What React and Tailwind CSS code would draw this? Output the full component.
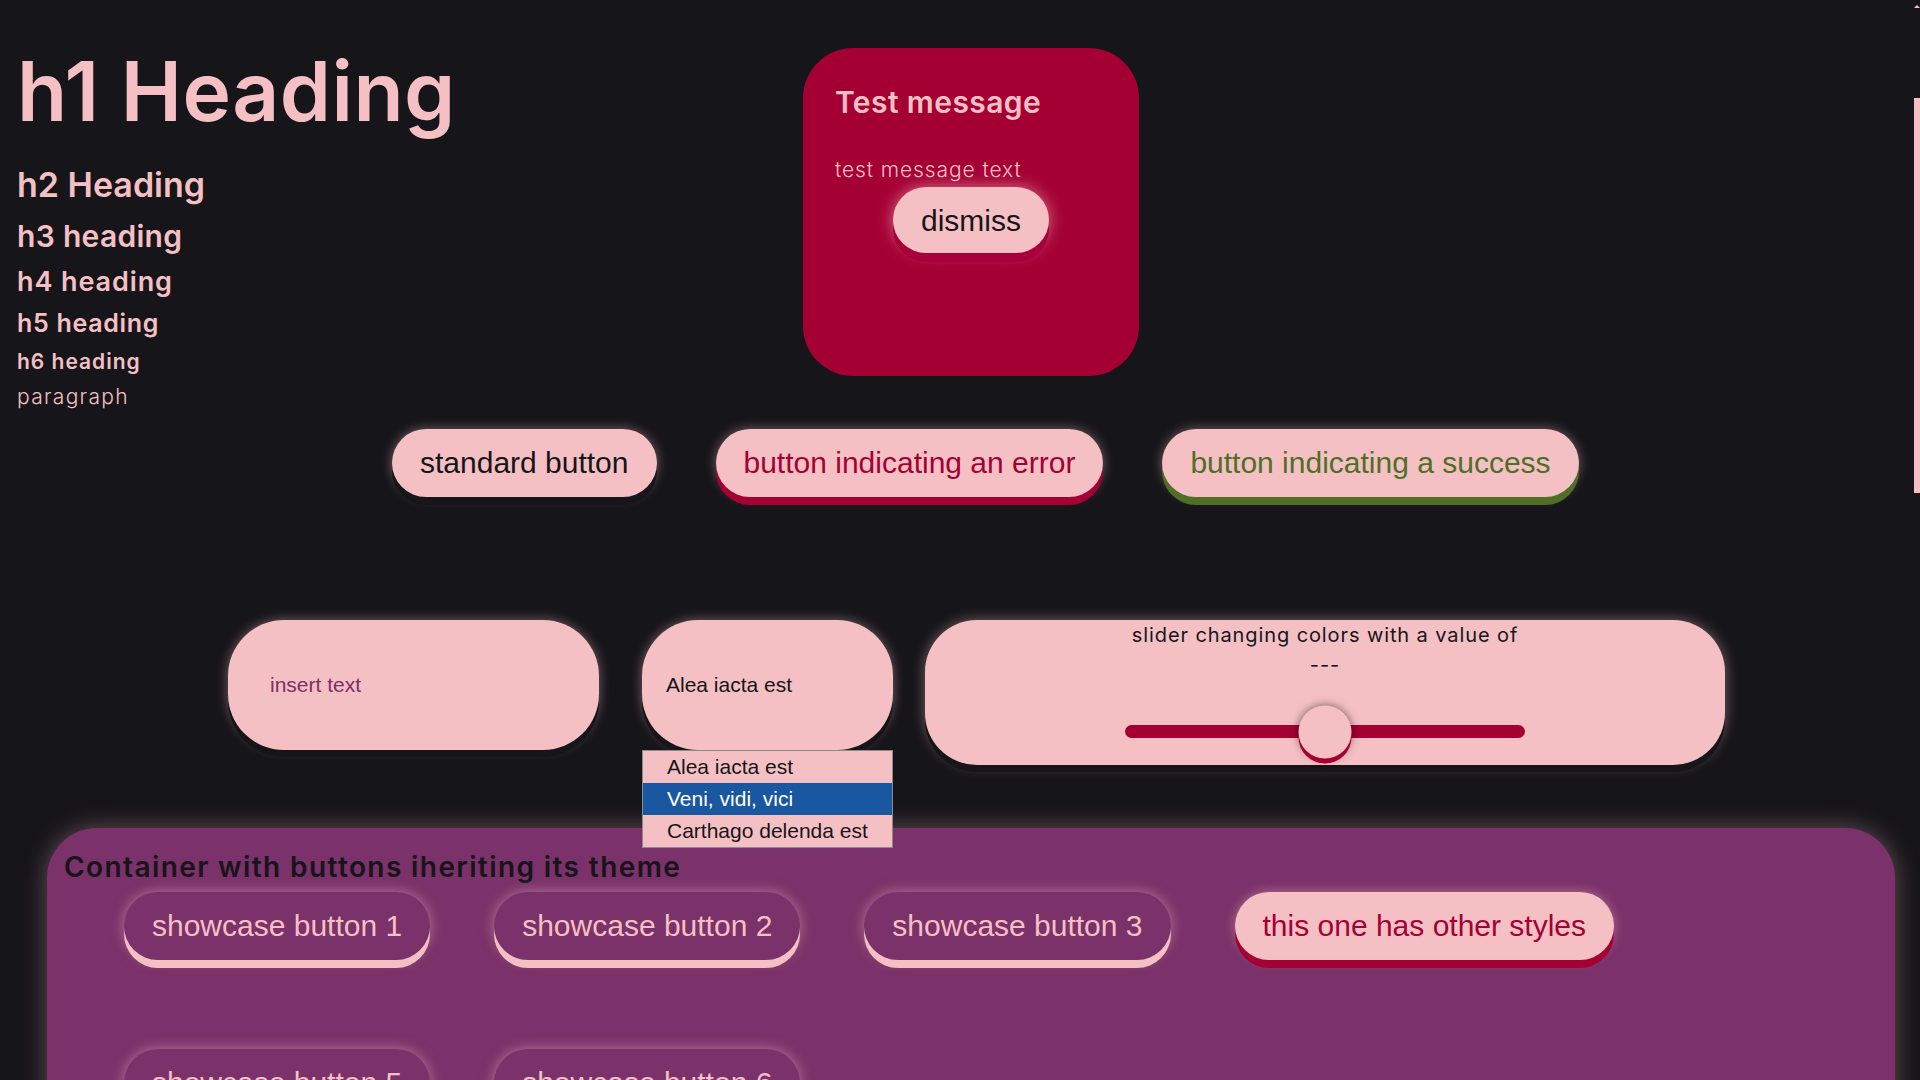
import { useState } from 'react'

const BTN_BASE =
  "h-[68px] shrink-0 rounded-full px-[28px] font-['Liberation_Sans',Arial,sans-serif] text-[30px] leading-[34px]"

const BTN_VARIANT = {
  standard: 'bg-[#f5c0c4] text-[#16151a] shadow-[0_8px_0_#16151a,0_0_12px_rgba(245,192,196,0.45)]',
  error: 'bg-[#f5c0c4] text-[#a50034] shadow-[0_8px_0_#a50034,0_0_12px_rgba(245,192,196,0.45)]',
  success: 'bg-[#f5c0c4] text-[#4e6f24] shadow-[0_8px_0_#4e6f24,0_0_12px_rgba(245,192,196,0.45)]',
  themed: 'bg-[#7b3169] text-[#f5c0c4] shadow-[0_8px_0_#f5c0c4,0_0_14px_rgba(245,192,196,0.5)]',
}

function Btn({ variant = 'standard', children }) {
  return <button className={`${BTN_BASE} ${BTN_VARIANT[variant]}`}>{children}</button>
}

const OPTIONS = ['Alea iacta est', 'Veni, vidi, vici', 'Carthago delenda est']

export default function App() {
  const [value] = useState(50)
  const [choice] = useState(OPTIONS[0])

  return (
    <div className="flex h-screen overflow-hidden bg-[#16151a] font-['Inter',sans-serif] text-[#f5c0c4]">
      <main className="min-w-0 flex-1">

        {/* headings + message */}
        <section className="flex h-[429px] items-start">
          <div className="w-[803px] pl-[17px] pt-[41px]">
            <h1 className="text-[82px] font-semibold leading-[101px] tracking-[0.5px]">h1 Heading</h1>
            <h2 className="mt-[22px] text-[34px] font-semibold leading-[41px]">h2 Heading</h2>
            <h3 className="mt-[13px] text-[30px] font-semibold leading-[36px] tracking-[0.3px]">h3 heading</h3>
            <h4 className="mt-[12px] text-[27px] font-semibold leading-[32px] tracking-[0.9px]">h4 heading</h4>
            <h5 className="mt-[10px] text-[25px] font-semibold leading-[30px] tracking-[0.7px]">h5 heading</h5>
            <h6 className="mt-[11px] text-[21px] font-semibold leading-[25px] tracking-[1px]">h6 heading</h6>
            <p className="mt-[11px] text-[21px] font-light leading-[24px] tracking-[1.3px]">paragraph</p>
          </div>

          <div className="mt-[48px] flex h-[328px] w-[336px] flex-col rounded-[50px] bg-[#a50034] px-[32px] pt-[36px]">
            <h2 className="text-[30px] font-semibold leading-[36px] tracking-[0.4px]">Test message</h2>
            <p className="mt-[38px] text-[21px] font-light leading-[24px] tracking-[0.9px]">test message text</p>
            <button className="mt-[5px] h-[66px] self-center rounded-full bg-[#f5c0c4] px-[28px] font-['Liberation_Sans',Arial,sans-serif] text-[30px] text-[#16151a] shadow-[0_9px_0_#a8003a,0_0_16px_rgba(245,192,196,0.6)]">
              dismiss
            </button>
          </div>
        </section>

        {/* buttons */}
        <section className="flex h-[191px] items-start gap-[59px] pl-[392px]">
          <Btn variant="standard">standard button</Btn>
          <Btn variant="error">button indicating an error</Btn>
          <Btn variant="success">button indicating a success</Btn>
        </section>

        {/* inputs */}
        <section className="flex h-[208px] items-start">
          <input
            placeholder="insert text"
            className="ml-[228px] h-[130px] w-[371px] rounded-[56px] bg-[#f5c0c4] pl-[42px] font-['Liberation_Sans',Arial,sans-serif] text-[21px] text-[#16151a] outline-none placeholder:text-[#7b3169] shadow-[0_7px_0_#16151a,0_0_12px_rgba(245,192,196,0.45)]"
          />

          <div className="relative z-10 ml-[43px] w-[251px] font-['Liberation_Sans',Arial,sans-serif] text-[21px]">
            <div className="flex h-[130px] items-center rounded-[56px] bg-[#f5c0c4] pl-[24px] text-[#16151a] shadow-[0_7px_0_#16151a,0_0_12px_rgba(245,192,196,0.45)]">
              {choice}
            </div>
            <ul className="absolute left-0 top-[130px] w-[251px] border border-[#8a8a8a] bg-[#f5c0c4] text-[21px] leading-[32px]">
              {OPTIONS.map((o, i) => (
                <li
                  key={o}
                  className={i === 1 ? 'bg-[#1957a0] pl-[24px] text-white' : 'pl-[24px] text-[#16151a]'}
                >
                  {o}
                </li>
              ))}
            </ul>
          </div>

          <div className="ml-[32px] flex h-[145px] w-[800px] flex-col items-center rounded-[52px] bg-[#f5c0c4] text-[#16151a] shadow-[0_7px_0_#16151a,0_0_14px_rgba(245,192,196,0.45)]">
            <p className="text-center text-[20px] leading-[30px] tracking-[0.9px]">
              slider changing colors with a value of
              <br />
              ---
            </p>
            <div className="relative mt-[45px] h-[13px] w-[400px] rounded-full bg-[#a50034]">
              <div
                className="absolute top-1/2 h-[53px] w-[53px] -translate-x-1/2 -translate-y-1/2 rounded-full bg-[#f5c0c4] shadow-[0_5px_0_#a50034,0_0_10px_rgba(0,0,0,0.55)]"
                style={{ left: `${value}%` }}
              />
            </div>
          </div>
        </section>

        {/* themed container */}
        <section className="ml-[47px] w-[1848px] rounded-[50px] bg-[#7b3169] px-[17px] pb-[80px] pt-[22px] shadow-[0_0_24px_rgba(245,192,196,0.35)]">
          <h2 className="text-[28px] font-semibold leading-[34px] tracking-[1.4px] text-[#16151a]">
            Container with buttons iheriting its theme
          </h2>
          <div className="mt-[8px] flex flex-wrap gap-x-[64px] gap-y-[89px] pl-[60px]">
            <Btn variant="themed">showcase button 1</Btn>
            <Btn variant="themed">showcase button 2</Btn>
            <Btn variant="themed">showcase button 3</Btn>
            <Btn variant="error">this one has other styles</Btn>
            <Btn variant="themed">showcase button 5</Btn>
            <Btn variant="themed">showcase button 6</Btn>
          </div>
        </section>
      </main>

      {/* scrollbar */}
      <aside className="flex w-[6px] shrink-0 flex-col items-center">
        <div className="mt-[5px] h-0 w-0 border-x-[3px] border-b-[3px] border-x-transparent border-b-[#f5c0c4]" />
        <div className="mt-[90px] h-[395px] w-[6px] bg-[#f5c0c4]" />
      </aside>
    </div>
  )
}
